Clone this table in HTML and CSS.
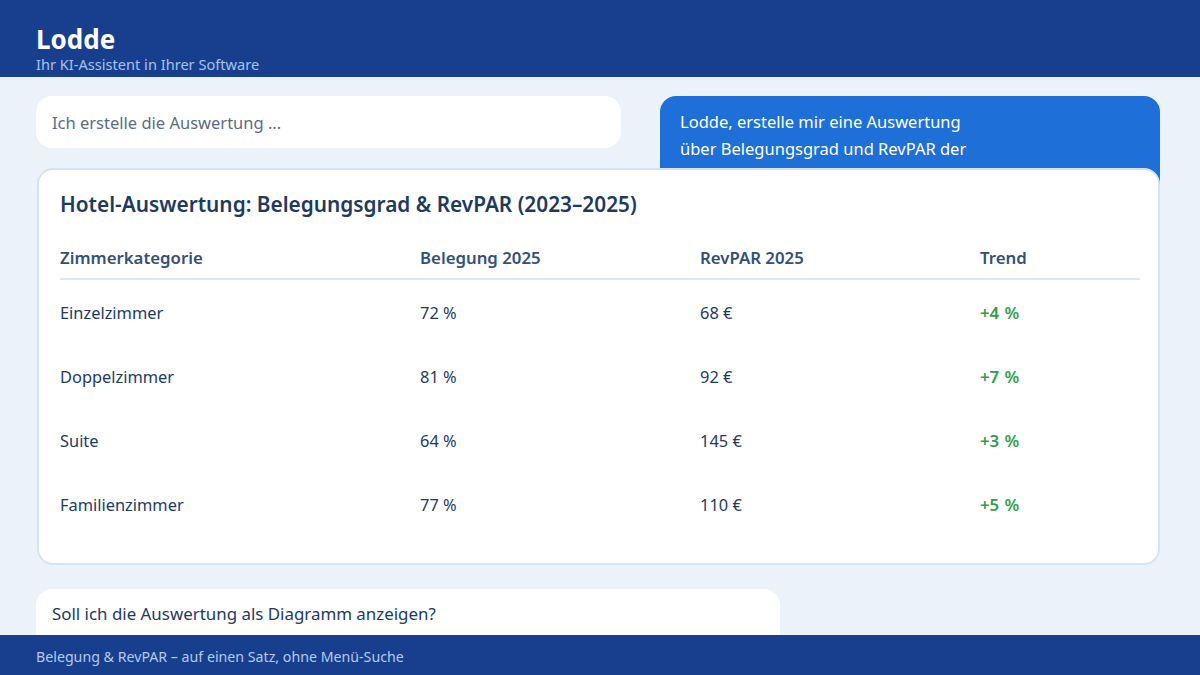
FILE: index.html
```html
<!DOCTYPE html>
<html lang="de">
<head>
<meta charset="utf-8">
<title>Lodde</title>
<link rel="stylesheet" href="styles.css">
</head>
<body>
<div class="app">
  <header class="topbar">
    <div class="brand">Lodde</div>
    <div class="tagline">Ihr KI-Assistent in Ihrer Software</div>
  </header>
  <main class="chat">
    <div class="row-top">
      <div class="bubble bubble-bot bubble-status">Ich erstelle die Auswertung ...</div>
      <div class="bubble bubble-user">Lodde, erstelle mir eine Auswertung<br>über Belegungsgrad und RevPAR der<br>letzten drei Jahre je Zimmerkategorie.</div>
    </div>
    <section class="card">
      <h2 class="card-title">Hotel-Auswertung: Belegungsgrad &amp; RevPAR (2023–2025)</h2>
      <div class="table">
        <div class="tr th">
          <div>Zimmerkategorie</div><div>Belegung 2025</div><div>RevPAR 2025</div><div>Trend</div>
        </div>
        <div class="tbody">
          <div class="tr"><div>Einzelzimmer</div><div>72 %</div><div>68 €</div><div class="up">+4 %</div></div>
          <div class="tr"><div>Doppelzimmer</div><div>81 %</div><div>92 €</div><div class="up">+7 %</div></div>
          <div class="tr"><div>Suite</div><div>64 %</div><div>145 €</div><div class="up">+3 %</div></div>
          <div class="tr"><div>Familienzimmer</div><div>77 %</div><div>110 €</div><div class="up">+5 %</div></div>
        </div>
      </div>
    </section>
    <div class="bubble bubble-bot bubble-question">Soll ich die Auswertung als Diagramm anzeigen?</div>
  </main>
  <footer class="footbar">Belegung &amp; RevPAR – auf einen Satz, ohne Menü-Suche</footer>
</div>
</body>
</html>
```
FILE: styles.css
```css
* { box-sizing: border-box; }
html, body { margin: 0; padding: 0; }
body {
  width: 1200px;
  height: 675px;
  overflow: hidden;
  background: #ebf2fa;
  font-family: "Noto Sans", "Open Sans", sans-serif;
  color: #1d3a64;
}
.app {
  display: flex;
  flex-direction: column;
  height: 675px;
}
.topbar {
  flex: 0 0 77px;
  background: #173f8d;
  padding: 23px 36px 0;
}
.brand {
  font-size: 26px;
  line-height: 32px;
  font-weight: 700;
  color: #ffffff;
}
.tagline {
  font-size: 14.6px;
  line-height: 19px;
  margin-top: 0;
  color: #a7c2ee;
}
.chat {
  flex: 1 1 auto;
  min-height: 0;
  overflow: hidden;
  padding: 19px 40px 0 36px;
}
.row-top {
  display: flex;
  justify-content: space-between;
  align-items: flex-start;
  height: 52px;
}
.bubble {
  border-radius: 16px;
  font-size: 16.5px;
}
.bubble-bot {
  background: #ffffff;
}
.bubble-status {
  width: 585px;
  height: 52px;
  padding: 0 16px;
  display: flex;
  align-items: center;
  color: #5b6c88;
}
.bubble-user {
  width: 500px;
  background: #1f6fd8;
  color: #ffffff;
  line-height: 27px;
  padding: 12px 20px;
}
.card {
  position: relative;
  z-index: 1;
  margin-top: 20px;
  margin-left: 1px;
  margin-right: 0;
  height: 397px;
  background: #ffffff;
  border: 2px solid #d4e4f8;
  border-radius: 16px;
  padding: 20px 17px 0 21px;
}
.card-title {
  margin: 0;
  font-size: 20.8px;
  line-height: 28px;
  font-weight: 600;
  color: #1d3a64;
}
.table {
  margin-top: 23px;
  margin-right: 1px;
}
.tr {
  display: grid;
  grid-template-columns: 360px 280px 280px 1fr;
  align-items: center;
  height: 64px;
  font-size: 16.4px;
}
.tr.th {
  height: 39px;
  border-bottom: 2px solid #dee7f2;
  font-weight: 600;
  font-size: 16.8px;
  color: #33507b;
  align-items: start;
  padding-top: 5px;
}
.tbody {
  padding-top: 0;
}
.up {
  color: #2f9e4f;
  font-weight: 600;
  font-size: 16.8px;
  word-spacing: 1px;
}
.bubble-question {
  margin-top: 24px;
  width: 744px;
  height: 60px;
  padding: 14px 16px 0;
  line-height: 22px;
  font-size: 16.9px;
  color: #1d3a64;
}
.footbar {
  flex: 0 0 40px;
  height: 40px;
  background: #173f8d;
  color: #b5caef;
  font-size: 14.2px;
  line-height: 36px;
  padding: 4px 36px 0;
}
```
